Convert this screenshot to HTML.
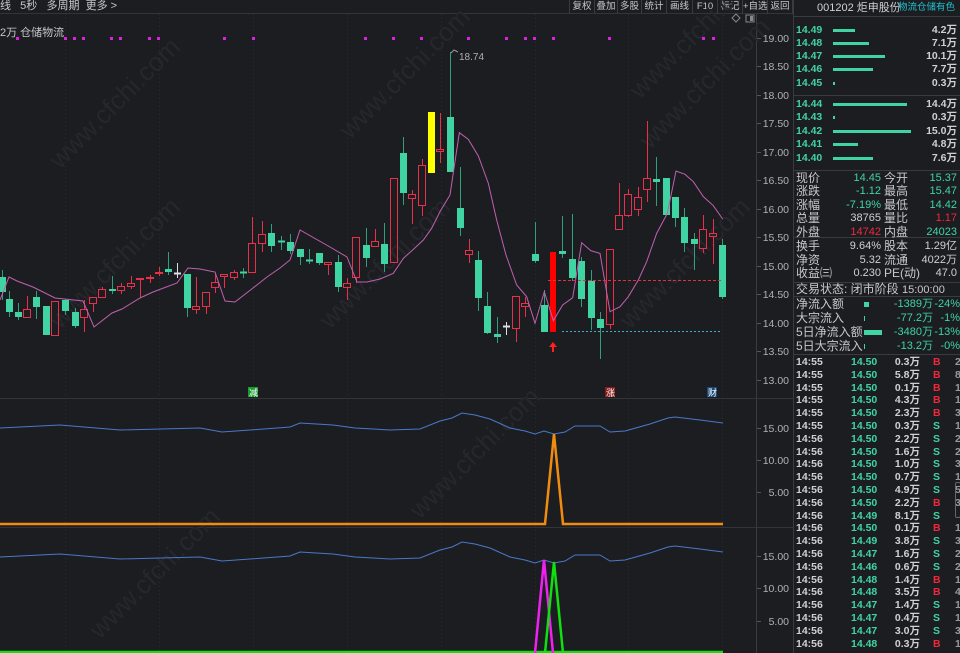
<!DOCTYPE html>
<html><head><meta charset="utf-8"><style>
*{margin:0;padding:0;box-sizing:border-box}
body{width:960px;height:653px;background:#1c1d21;overflow:hidden;position:relative;font-family:"Liberation Sans","Noto Sans CJK SC",sans-serif;color:#c8c8cc;font-size:11px}
.a{position:absolute;white-space:nowrap}
#rp{position:absolute;left:793px;top:0;width:167px;height:653px;background:#1c1d21;border-left:1px solid #3a3b40}
.hl{position:absolute;left:0;width:167px;height:1px;background:#3a3b40}
.bar{position:absolute;height:3px;background:#3fd4a2}
.tb{position:absolute;top:0;height:14px;border-left:1px solid #3a3b40;font-size:9.5px;line-height:13px;text-align:center;color:#c8c8cc;overflow:visible;white-space:nowrap}
</style></head><body>
<div class="a" style="left:0;top:0;line-height:12px">线&nbsp;&nbsp;&nbsp;5秒&nbsp;&nbsp;&nbsp;多周期&nbsp;&nbsp;更多 &gt;</div>
<div class="a" style="left:0;top:13px;width:793px;height:1px;background:#33343a"></div>
<div class="tb" style="left:569px;width:25px">复权</div><div class="tb" style="left:594px;width:23px">叠加</div><div class="tb" style="left:617px;width:24px">多股</div><div class="tb" style="left:641px;width:25px">统计</div><div class="tb" style="left:666px;width:26px">画线</div><div class="tb" style="left:692px;width:25px">F10</div><div class="tb" style="left:717px;width:25px">标记</div><div class="tb" style="left:742px;width:25px">+自选</div><div class="tb" style="left:767px;width:26px;border-right:1px solid #3a3b40">返回</div>
<div class="a" style="left:0;top:24px;font-size:11px">2万 仓储物流</div>
<svg class="a" style="left:0;top:0" width="793" height="653" id="sv"></svg>
<div id="rp"></div>
<script>
var s='';
function L(x1,y1,x2,y2,c,w,d){s+='<line x1="'+x1+'" y1="'+y1+'" x2="'+x2+'" y2="'+y2+'" stroke="'+c+'" stroke-width="'+(w||1)+'"'+(d?' stroke-dasharray="'+d+'"':'')+'/>';}
function P(pts,c,w){s+='<polyline fill="none" stroke="'+c+'" stroke-width="'+(w||1)+'" points="'+pts.map(function(p){return p.join(',')}).join(' ')+'"/>';}
function T(x,y,t,c,sz,a){s+='<text x="'+x+'" y="'+y+'" fill="'+c+'" font-size="'+(sz||11)+'" font-family="Liberation Sans,Noto Sans CJK SC,sans-serif"'+(a?' text-anchor="'+a+'"':'')+'>'+t+'</text>';}
[65,159,253,347,441,535,628,722].forEach(function(x){L(x+.5,14,x+.5,653,'#2c2d33',1,'1 3');});
L(756.5,14,756.5,653,'#3a3b40');L(0,398.5,793,398.5,'#33343a');L(0,527.5,793,527.5,'#33343a');
[[60,170],[350,140],[650,150],[60,330],[330,330],[630,330],[640,100],[420,520],[100,640]].forEach(function(p){s+='<text x="'+p[0]+'" y="'+p[1]+'" fill="#26272c" font-size="26" transform="rotate(-45 '+p[0]+' '+p[1]+')" font-family="Liberation Sans">www.cfchi.com</text>';});
var ax=[[38,'19.00'],[66,'18.50'],[95,'18.00'],[123,'17.50'],[152,'17.00'],[180,'16.50'],[209,'16.00'],[237,'15.50'],[266,'15.00'],[294,'14.50'],[323,'14.00'],[351,'13.50'],[380,'13.00'],[428,'15.00'],[460,'10.00'],[492,'5.00'],[556,'15.00'],[588,'10.00'],[621,'5.00']];
ax.forEach(function(a){T(789,a[0]+4,a[1],'#b0b0b6',10.5,'end');L(757,a[0]+.5,761,a[0]+.5,'#555');});
[17,65,74,83,111,120,149,158,224,253,365,393,421,468,506,525,534,553,609,703,713].forEach(function(x){s+='<rect x="'+(x-1)+'" y="37" width="3" height="3" fill="#e020e0"/>';});
var C=[[2,277,292,270,300,'g'],[9,299,312,291,317,'g'],[18,312,317,303,320,'g'],[27,309,317,296,317,'r'],[36,297,307,291,319,'g'],[46,306,335,306,335,'g'],[55,301,335,301,335,'r'],[65,300,311,299,315,'g'],[75,312,326,308,328,'g'],[84,309,317,300,332,'r'],[93,297,303,297,312,'r'],[102,289,297,287,297,'r'],[112,289,291,276,294,'g'],[121,286,290,283,294,'r'],[131,283,286,276,289,'r'],[140,278,279,278,297,'r'],[150,277,278,275,283,'r'],[159,272,273,267,276,'r'],[168,269,272,252,275,'g'],[177,273,273,263,278,'w'],[187,274,308,274,317,'g'],[196,306,309,277,314,'r'],[206,292,306,292,314,'r'],[215,282,287,273,293,'r'],[224,274,276,274,288,'r'],[234,272,277,270,280,'r'],[243,272,272,268,278,'g'],[252,243,272,217,273,'r'],[262,234,243,221,252,'r'],[271,233,246,224,252,'g'],[281,241,241,236,250,'g'],[290,242,251,234,254,'g'],[300,249,257,249,265,'g'],[309,260,260,249,264,'g'],[319,253,263,253,265,'g'],[328,262,264,262,275,'r'],[338,262,287,255,292,'g'],[347,283,287,278,300,'r'],[356,237,277,237,283,'r'],[366,245,258,228,267,'g'],[375,241,246,229,247,'r'],
[384,244,264,223,272,'g'],[394,178,262,178,262,'r'],[403,153,193,137,205,'g'],[412,194,198,190,224,'r'],[422,165,205,159,216,'r'],[431,112,173,112,173,'y'],[440,149,151,113,163,'r'],[450,117,172,52,172,'g'],[460,208,228,167,236,'g'],[469,250,254,239,263,'r'],[478,260,298,251,311,'g'],[487,306,333,292,334,'g'],[497,334,337,317,343,'g'],[506,326,326,322,335,'w'],[516,296,328,296,342,'r'],[525,303,306,297,317,'r'],[535,254,261,222,263,'g'],[544,305,332,290,332,'g'],[553,252,332,252,332,'R'],[562,251,254,216,258,'g'],[572,259,278,214,281,'g'],[581,261,299,257,307,'g'],[591,281,318,270,330,'g'],[600,319,328,312,359,'g'],[610,249,324,249,329,'r'],[619,215,229,183,229,'r'],[628,194,215,189,217,'r'],[638,197,209,187,216,'r'],[647,178,189,121,202,'r'],[656,179,182,157,206,'g'],[666,178,215,178,215,'g'],[675,197,218,197,227,'g'],[684,217,243,208,252,'g'],[694,239,244,233,270,'g'],[703,229,248,215,253,'r'],[713,233,236,219,264,'r'],[722,245,297,239,299,'g']];
C.forEach(function(c){var x=c[0],t=c[1],b=c[2],col={g:'#3fd4a2',r:'#e8304a',w:'#e0e0e0',y:'#ffff00',R:'#ff0000'}[c[5]];
 if(c[5]=='r'){L(x+.5,c[3],x+.5,t,col);L(x+.5,b,x+.5,c[4],col);s+='<rect x="'+(x-3.5)+'" y="'+(t+.5)+'" width="7" height="'+Math.max(b-t,1)+'" fill="none" stroke="'+col+'"/>';}
 else{L(x+.5,c[3],x+.5,c[4],c[5]=='g'?'#2fa07c':col);var h=Math.max(b-t,1);if(c[5]=='w'||h<2){L(x-3,t+.5,x+4,t+.5,col,2);}else s+='<rect x="'+(x-3)+'" y="'+t+'" width="'+(c[5]=='R'?6:7)+'" height="'+h+'" fill="'+col+'"/>';}});
var m1=[[0,300],[9,277],[17,281],[33,287],[55,298],[83,301],[94,327],[112,313],[122,309],[140,298],[153,292],[177,283],[188,268],[200,269],[215,272],[225,301],[235,302],[253,288],[267,277],[280,268],[290,260],[300,230],[330,247],[347,257],[357,282],[367,282],[380,279]];
var z=[[0,717],[40,700],[70,655],[100,628],[130,600],[155,565],[180,515],[210,465],[238,278],[265,298],[295,348],[325,430],[350,540],[378,645],[410,735],[440,770],[465,850],[493,755],[520,842],[548,795],[578,773],[605,608],[632,632],[660,640],[690,815],[720,800],[745,770],[775,720],[800,665],[830,580],[862,520],[888,393],[915,403],[940,425],[970,470],[1000,497],[1028,537]];
z.forEach(function(p){m1.push([p[0]/3+380,p[1]/3+40]);});P(m1,'#c060b0',1);
L(548,280.5,722,280.5,'#e03040',1,'3 2');L(562,331.5,722,331.5,'#40b0c0',1,'2 2');
T(459,60,'18.74','#b0b0b6',10);P([[451,53],[454,50],[458,52]],'#999',1);
s+='<path d="M553 342 l-4 5 h3 v5 h2 v-5 h3z" fill="#ff2020"/>';
s+='<rect x="248" y="387" width="10" height="10" fill="#1a9a30"/>';T(249,396,'减','#fff',9);
s+='<rect x="605" y="387" width="10" height="10" fill="#8a1a1a"/>';T(606,396,'涨','#fff',9);
s+='<rect x="707" y="387" width="10" height="10" fill="#1a4a7a"/>';T(708,396,'财','#fff',9);
s+='<path d="M736 14 l4 4 -4 4 -4 -4z" fill="none" stroke="#888"/><rect x="746" y="15" width="8" height="7" fill="none" stroke="#888"/><rect x="750" y="16" width="3" height="5" fill="#888"/>';
var b1=[[0,428],[60,425],[120,430],[200,428],[222,432],[250,430],[290,427],[300,423],[333,425],[355,428],[390,430],[420,429],[440,421],[452,418],[462,413],[475,415],[490,419],[510,428],[525,431],[535,434],[544,431],[554,434],[565,432],[575,426],[600,426],[610,432],[625,431],[650,424],[668,418],[675,417],[700,420],[723,423]];
P(b1,'#4a78c8',1);P(b1.map(function(p){return[p[0],p[1]+129]}),'#4a78c8',1);
P([[0,524],[545,524],[554,434],[563,524],[723,524]],'#f08c10',2.5);
P([[0,652],[723,652]],'#10e010',2.5);
P([[535,653],[544,560],[553,653]],'#f020f0',2.5);P([[545,653],[554,562],[563,653]],'#10e010',2.5);
document.getElementById('sv').innerHTML=s;
var r='';function R(x,y,t,c,a,sz,fw){r+='<div class="a" style="'+(a=='r'?'right:'+x+'px':'left:'+x+'px')+';top:'+y+'px;color:'+c+';font-size:'+(sz||11)+'px;line-height:13px;'+(fw?'font-weight:bold;':'')+'">'+t+'</div>';}
function H(y){r+='<div class="hl" style="top:'+y+'px"></div>';}
R(23,2,'001202 炬申股份','#d0d0d4','l',11);R(104,1,'物流仓储有色','#20c0d0','l',9.5);
H(16);H(95);H(170);H(237);H(282);H(296);H(354);
var ob=[[24,'14.49',22,'4.2万'],[37,'14.48',36,'7.1万'],[50,'14.47',52,'10.1万'],[63,'14.46',40,'7.7万'],[77,'14.45',2,'0.3万'],[98,'14.44',74,'14.4万'],[111,'14.43',2,'0.3万'],[125,'14.42',78,'15.0万'],[138,'14.41',25,'4.8万'],[152,'14.40',40,'7.6万']];
ob.forEach(function(o){R(2,o[0],o[1],'#3fd4a2','l',10.5,1);r+='<div class="bar" style="left:39px;top:'+(o[0]+5)+'px;width:'+o[2]+'px"></div>';R(3,o[0],o[3],'#d0d0d4','r',10.5,1);});
var st=[[172,'现价','14.45','g','今开','15.37','g'],[185,'涨跌','-1.12','g','最高','15.47','g'],[199,'涨幅','-7.19%','g','最低','14.42','g'],[212,'总量','38765','w','量比','1.17','r'],[226,'外盘','14742','r','内盘','24023','g'],[240,'换手','9.64%','w','股本','1.29亿','w'],[254,'净资','5.32','w','流通','4022万','w'],[267,'收益㈢','0.230','w','PE(动)','47.0','w']];
var cc={g:'#3fd4a2',r:'#f0283c',w:'#d0d0d4'};
st.forEach(function(o){R(2,o[0],o[1],'#c8c8cc','l',12);R(79,o[0],o[2],cc[o[3]],'r',11);R(90,o[0],o[4],'#c8c8cc','l',12);R(3,o[0],o[5],cc[o[6]],'r',11);});
R(2,283,'交易状态: 闭市阶段 <span style="font-size:11px">15:00:00</span>','#c8c8cc','l',12);
var fl=[[298,'净流入额',5,'-1389万','-24%'],[312,'大宗流入',1,'-77.2万','-1%'],[326,'5日净流入额',18,'-3480万','-13%'],[340,'5日大宗流入',1,'-13.2万','-0%']];
fl.forEach(function(o){R(2,o[0],o[1],'#c8c8cc','l',12);r+='<div class="a" style="left:70px;top:'+(o[0]+4)+'px;width:'+o[2]+'px;height:5px;background:#3fd4a2"></div>';R(27,o[0],o[3],'#3fd4a2','r',11);R(0,o[0],o[4],'#3fd4a2','r',11);});
var tk=[['14:55','14.50','0.3万','B','2'],['14:55','14.50','5.8万','B','8'],['14:55','14.50','0.1万','B','1'],['14:55','14.50','4.3万','B','10'],['14:55','14.50','2.3万','B','3'],['14:55','14.50','0.3万','S','1'],['14:56','14.50','2.2万','S','2'],['14:56','14.50','1.6万','S','2'],['14:56','14.50','1.0万','S','3'],['14:56','14.50','0.7万','S','1'],['14:56','14.50','4.9万','S','5'],['14:56','14.50','2.2万','B','3'],['14:56','14.49','8.1万','S',''],['14:56','14.50','0.1万','B','1'],['14:56','14.49','3.8万','S','3'],['14:56','14.47','1.6万','S','2'],['14:56','14.46','0.6万','S','2'],['14:56','14.48','1.4万','B','1'],['14:56','14.48','3.5万','B','4'],['14:56','14.47','1.4万','S','1'],['14:56','14.47','0.4万','S','1'],['14:56','14.47','3.0万','S','3'],['14:56','14.48','0.3万','B','1']];
tk.forEach(function(o,i){var y=356+i*12.8;R(2,y,o[0],'#d0d0d4','l',10.5,1);R(57,y,o[1],'#3fd4a2','l',10.5,1);R(40,y,o[2],'#d0d0d4','r',10.5,1);R(139,y,o[3],o[3]=='B'?'#f0283c':'#3fd4a2','l',10.5,1);R(161,y,o[4],'#999','l',10.5,1);});
r+='<div class="a" style="left:161px;top:482px;width:6px;height:36px;border:1px solid #666;border-radius:2px"></div>';
document.getElementById('rp').innerHTML=r;
</script>
</body></html>
